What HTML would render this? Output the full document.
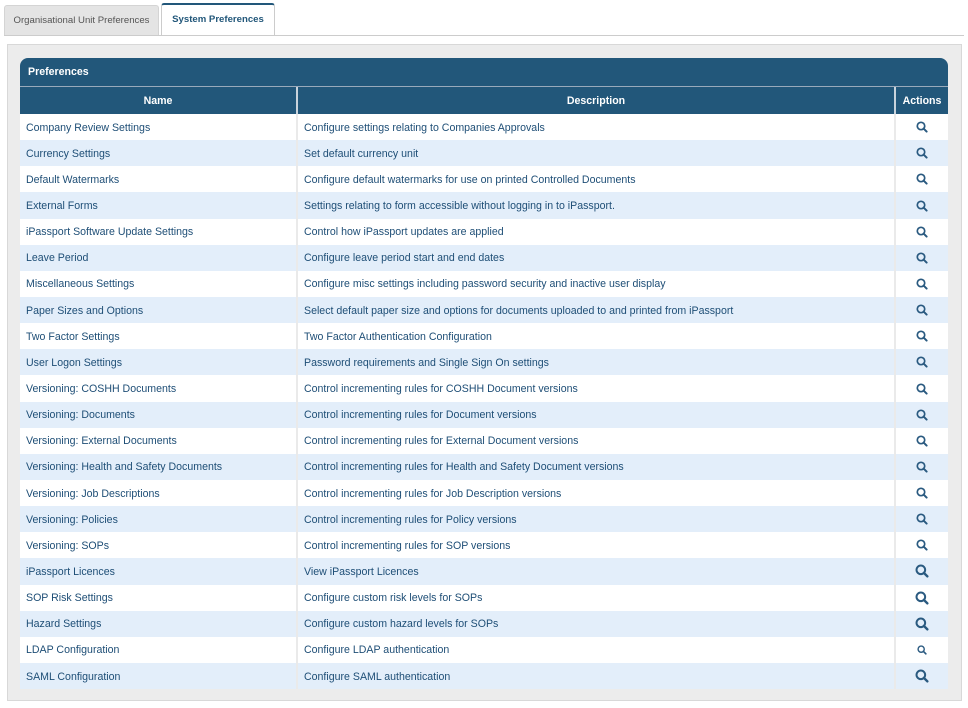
<!DOCTYPE html>
<html><head><style>
body{margin:0;width:968px;height:708px;background:#fff;font-family:"Liberation Sans",Arial,sans-serif;position:relative;overflow:hidden}
.tab{position:absolute;font-size:9.6px;text-align:center;box-sizing:border-box}
.t1{left:4px;top:5px;width:155px;height:31px;background:#e4e4e4;border:1px solid #d4d4d4;border-bottom:none;color:#555;line-height:29px;border-radius:3px 3px 0 0}
.t2{left:161px;top:3px;width:114px;height:33px;background:#fff;border:1px solid #ccc;border-top:2px solid #22577a;border-bottom:none;color:#22577a;font-weight:bold;line-height:30px;border-radius:3px 3px 0 0}
.line{position:absolute;left:4px;top:35px;width:960px;height:1px;background:#ccc}
.panel{position:absolute;left:7px;top:44px;width:955px;height:657px;background:#ececec;border:1px solid #d8d8d8;box-sizing:border-box}
.wrap{position:absolute;left:20px;top:58px;width:928px}
.cap{background:#22577a;color:#fff;font-weight:bold;font-size:10.6px;height:28px;line-height:29px;padding-left:8px;border-radius:8px 8px 0 0;border-bottom:1px solid #9ab}
table{border-collapse:collapse;width:928px;font-size:10.6px;table-layout:fixed}
th{background:#22577a;color:#fff;height:27px;font-size:10.6px;border-right:2px solid #c8d3dc;padding:0}
th:last-child{border-right:none}
td{height:26.15px;padding:1px 0 0 6px;color:#1e4e76;border-right:2px solid #eaeaea;box-sizing:border-box}
td:last-child{border-right:none;text-align:center;padding:0}
tr:nth-child(odd) td{background:#fff}
tr:nth-child(even) td{background:#e3eefa}
svg{vertical-align:middle}
</style></head><body>
<div class="tab t1">Organisational Unit Preferences</div>
<div class="tab t2">System Preferences</div>
<div class="line"></div>
<div class="panel"></div>
<div class="wrap">
<div class="cap">Preferences</div>
<table>
<colgroup><col style="width:277px"><col style="width:598px"><col style="width:53px"></colgroup>
<thead><tr><th>Name</th><th>Description</th><th>Actions</th></tr></thead>
<tbody id="b">
<tr><td>Company Review Settings</td><td>Configure settings relating to Companies Approvals</td><td>Q</td></tr>
<tr><td>Currency Settings</td><td>Set default currency unit</td><td>Q</td></tr>
<tr><td>Default Watermarks</td><td>Configure default watermarks for use on printed Controlled Documents</td><td>Q</td></tr>
<tr><td>External Forms</td><td>Settings relating to form accessible without logging in to iPassport.</td><td>Q</td></tr>
<tr><td>iPassport Software Update Settings</td><td>Control how iPassport updates are applied</td><td>Q</td></tr>
<tr><td>Leave Period</td><td>Configure leave period start and end dates</td><td>Q</td></tr>
<tr><td>Miscellaneous Settings</td><td>Configure misc settings including password security and inactive user display</td><td>Q</td></tr>
<tr><td>Paper Sizes and Options</td><td>Select default paper size and options for documents uploaded to and printed from iPassport</td><td>Q</td></tr>
<tr><td>Two Factor Settings</td><td>Two Factor Authentication Configuration</td><td>Q</td></tr>
<tr><td>User Logon Settings</td><td>Password requirements and Single Sign On settings</td><td>Q</td></tr>
<tr><td>Versioning: COSHH Documents</td><td>Control incrementing rules for COSHH Document versions</td><td>Q</td></tr>
<tr><td>Versioning: Documents</td><td>Control incrementing rules for Document versions</td><td>Q</td></tr>
<tr><td>Versioning: External Documents</td><td>Control incrementing rules for External Document versions</td><td>Q</td></tr>
<tr><td>Versioning: Health and Safety Documents</td><td>Control incrementing rules for Health and Safety Document versions</td><td>Q</td></tr>
<tr><td>Versioning: Job Descriptions</td><td>Control incrementing rules for Job Description versions</td><td>Q</td></tr>
<tr><td>Versioning: Policies</td><td>Control incrementing rules for Policy versions</td><td>Q</td></tr>
<tr><td>Versioning: SOPs</td><td>Control incrementing rules for SOP versions</td><td>Q</td></tr>
<tr><td>iPassport Licences</td><td>View iPassport Licences</td><td>L</td></tr>
<tr><td>SOP Risk Settings</td><td>Configure custom risk levels for SOPs</td><td>L</td></tr>
<tr><td>Hazard Settings</td><td>Configure custom hazard levels for SOPs</td><td>L</td></tr>
<tr><td>LDAP Configuration</td><td>Configure LDAP authentication</td><td>S</td></tr>
<tr><td>SAML Configuration</td><td>Configure SAML authentication</td><td>L</td></tr>
</tbody></table></div>
<script>
document.querySelectorAll('#b td:last-child').forEach(function(td){
var s={Q:12,L:14,S:10}[td.textContent];
td.innerHTML='<svg width="'+s+'" height="'+s+'" viewBox="0 0 12 12"><circle cx="5" cy="5" r="3.7" fill="none" stroke="#2a5a80" stroke-width="1.7"/><path d="M7.6 7.6L10.6 10.6" stroke="#2a5a80" stroke-width="2" stroke-linecap="round"/></svg>';
});
</script>
</body></html>
